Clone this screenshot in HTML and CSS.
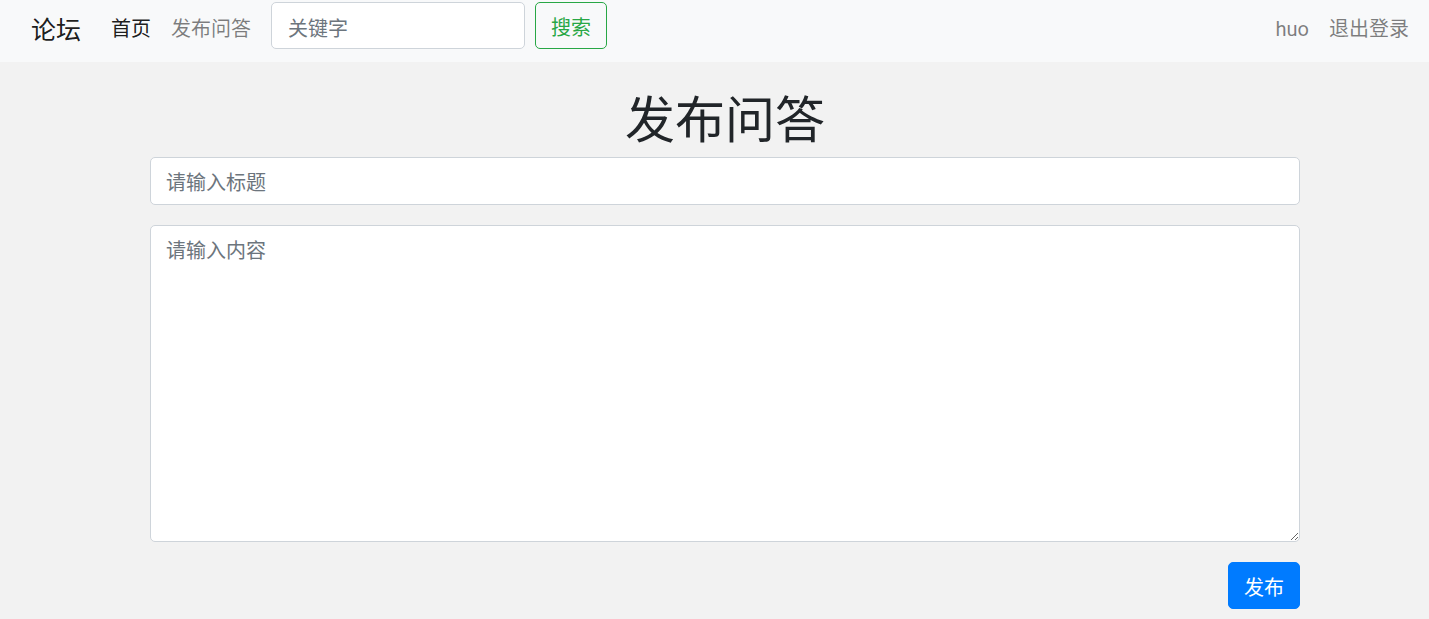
FILE: index.html
```html
<!DOCTYPE html>
<html lang="zh">
<head>
    <meta charset="UTF-8">
    <meta name="viewport" content="width=device-width, initial-scale=1.0">
    <title>发布问答</title>
    <link rel="stylesheet" href="styles.css">
</head>
<body>

    <nav class="navbar">
        <a class="brand" href="#">论坛</a>
        <ul class="nav">
            <li><a class="nav-link active" href="#">首页</a></li>
            <li><a class="nav-link" href="#">发布问答</a></li>
        </ul>
        <form class="search">
            <input type="text" class="search-input" placeholder="关键字">
            <button type="button" class="btn-search">搜索</button>
        </form>
        <ul class="nav nav-right">
            <li><a class="nav-link user" href="#">huo</a></li>
            <li><a class="nav-link last" href="#">退出登录</a></li>
        </ul>
    </nav>

    <div id="container">
        <h1>发布问答</h1>
        <form>
            <input type="text" class="form-control" placeholder="请输入标题">
            <textarea class="form-control content" placeholder="请输入内容"></textarea>
            <div class="actions">
                <button type="button" class="btn-primary">发布</button>
            </div>
        </form>
    </div>

</body>
</html>
```

FILE: styles.css
```css
body {
    font-family: "Segoe UI", Roboto, "Noto Sans CJK SC", sans-serif;
    font-size: 20px;
    margin: 0;
    background-color: #f2f2f2;
    color: #212529;
}

a {
    text-decoration: none;
}

.navbar {
    display: flex;
    align-items: center;
    height: 62px;
    box-sizing: border-box;
    padding: 2px 20px 13px 31px;
    background-color: #f8f9fa;
}

.brand {
    font-size: 25px;
    color: rgba(0, 0, 0, 0.9);
    margin-right: 20px;
    padding-top: 4px;
}

.nav {
    display: flex;
    list-style: none;
    margin: 0;
    padding: 0;
}

.nav-link {
    display: block;
    padding: 4px 10px 0;
    color: rgba(0, 0, 0, 0.5);
}

.nav-link.active {
    color: rgba(0, 0, 0, 0.9);
}

.nav-link.user {
    padding-top: 8px;
}

.nav-link.last {
    padding-right: 0;
}

.search {
    display: flex;
    margin-left: 10px;
}

.search-input {
    width: 254px;
    height: 47px;
    box-sizing: border-box;
    padding: 11px 16px 5px;
    font: inherit;
    color: #495057;
    background-color: #fff;
    border: 1px solid #ced4da;
    border-radius: 5px;
    margin-right: 10px;
}

.btn-search {
    width: 72px;
    height: 47px;
    font: inherit;
    color: #28a745;
    background: transparent;
    border: 1px solid #28a745;
    border-radius: 5px;
    padding: 2px 0 0;
}

.nav-right {
    margin-left: auto;
}

#container {
    width: 1150px;
    margin-left: 150px;
    padding-top: 29px;
}

h1 {
    font-size: 50px;
    font-weight: 400;
    line-height: 1.2;
    text-align: center;
    margin: 0 0 6px;
}

.form-control {
    display: block;
    width: 100%;
    box-sizing: border-box;
    padding: 9px 15px 5px;
    font: inherit;
    line-height: 1.5;
    color: #495057;
    background-color: #fff;
    border: 1px solid #ced4da;
    border-radius: 5px;
    margin: 0 0 20px;
    height: 48px;
}

.content {
    height: 317px;
    padding-top: 10px;
}

::placeholder {
    color: #6c757d;
}

.actions {
    display: flex;
    justify-content: flex-end;
}

.btn-primary {
    width: 72px;
    height: 47px;
    font: inherit;
    color: #fff;
    background-color: #007bff;
    border: 1px solid #007bff;
    border-radius: 5px;
    padding: 2px 0 0;
}
```
